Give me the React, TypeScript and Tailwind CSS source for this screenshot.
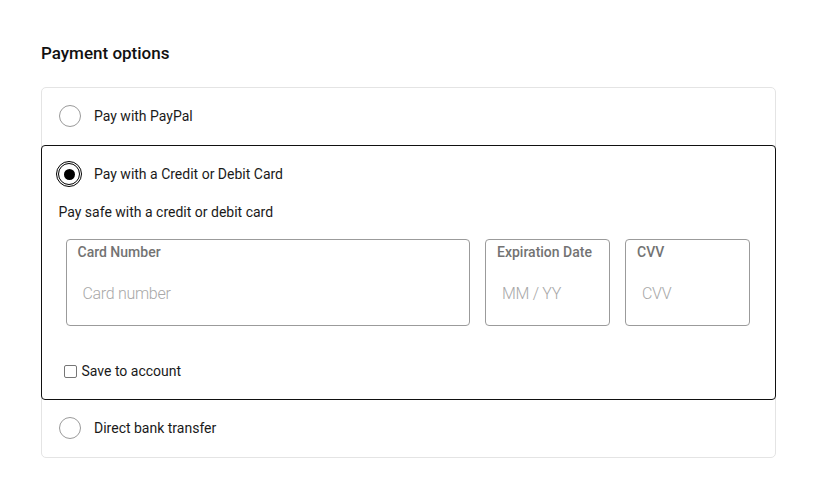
import React from "react";

function Radio({ checked }: { checked?: boolean }) {
  if (checked) {
    return (
      <span className="flex h-[26px] w-[26px] shrink-0 items-center justify-center rounded-full border border-black">
        <span className="flex h-[22px] w-[22px] items-center justify-center rounded-full border-[1.5px] border-black bg-white">
          <span className="h-[11px] w-[11px] rounded-full bg-black" />
        </span>
      </span>
    );
  }
  return <span className="h-[22px] w-[22px] shrink-0 rounded-full border border-[#9a9a9a] bg-white" />;
}

function Field({ label, placeholder, className }: { label: string; placeholder: string; className?: string }) {
  return (
    <div className={"flex h-[87px] flex-col rounded-[4px] border border-[#9b9b9b] px-[11px] pt-[2px] " + (className ?? "")}>
      <span className="text-[14px] font-medium leading-5 text-[#737373]">{label}</span>
      <span className="mt-[22px] pl-[5px] text-[16px] font-light leading-5 tracking-[-0.3px] text-[#a8a8a8]">{placeholder}</span>
    </div>
  );
}

export default function App() {
  return (
    <div className="min-h-[501px] w-[817px] bg-white px-[41px] pt-[43px] text-[#1a1a1a]" style={{ fontFamily: "Roboto, 'Noto Sans', sans-serif" }}>
      <h2 className="text-[17px] font-medium leading-5 text-[#111]">Payment options</h2>
      <div className="mt-[24px] rounded-[5px] border border-[#e4e4e4]">
        <div className="flex h-[57px] items-center gap-[13px] pl-[17px] pb-[1px]">
          <Radio />
          <span className="text-[14px] leading-5">Pay with PayPal</span>
        </div>
        <div className="-mx-px rounded-[4px] border-[1.5px] border-[#111] pb-[18px]">
          <div className="flex h-[56px] items-center gap-[12px] pl-[14px]">
            <Radio checked />
            <span className="text-[14px] leading-5">Pay with a Credit or Debit Card</span>
          </div>
          <p className="pl-[16.5px] text-[14px] leading-5">Pay safe with a credit or debit card</p>
          <div className="mt-[17px] flex gap-[15px] pl-[23.5px] pr-[25px]">
            <Field label="Card Number" placeholder="Card number" className="flex-1" />
            <Field label="Expiration Date" placeholder="MM / YY" className="w-[125px]" />
            <Field label="CVV" placeholder="CVV" className="w-[125px]" />
          </div>
          <div className="mt-[35px] flex items-center gap-[5px] pl-[21.5px]">
            <span className="h-[13px] w-[13px] rounded-[2px] border border-[#767676] bg-white" />
            <span className="text-[14px] leading-5">Save to account</span>
          </div>
        </div>
        <div className="flex h-[57px] items-center gap-[13px] pl-[17px] pb-[1px]">
          <Radio />
          <span className="text-[14px] leading-5">Direct bank transfer</span>
        </div>
      </div>
    </div>
  );
}
